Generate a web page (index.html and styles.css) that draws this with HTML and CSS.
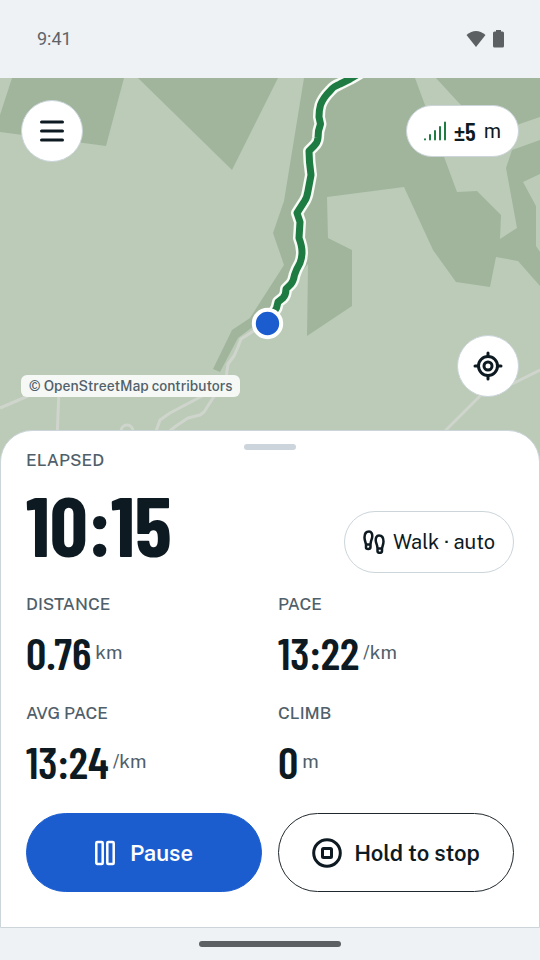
FILE: index.html
```
<!DOCTYPE html>
<html lang="en">
<head>
<meta charset="utf-8">
<meta name="viewport" content="width=device-width, initial-scale=1">
<title>Recording</title>
<link rel="stylesheet" href="styles.css">
</head>
<body>
<header class="status">
  <span class="clock">9:41</span>
  <span class="status-icons">
    <svg width="20" height="18" viewBox="0 0 20 18" aria-hidden="true"><path d="M.5 5Q10-3 19.500 5L10 17Z"/></svg>
    <svg width="11" height="18" viewBox="0 0 11 18" aria-hidden="true"><path d="M3 0h5v1.500h1.500q1.500 0 1.500 1.500v13q0 1.500-1.500 1.500h-8Q0 17.500 0 16V3q0-1.500 1.500-1.500H3z"/></svg>
  </span>
</header>

<main class="map">
  <svg class="map-art" viewBox="0 78 540 384" preserveAspectRatio="xMidYMin slice" aria-hidden="true">
    <g class="wood">
      <path d="M12 78H124L106 146L0 132V115Z"/>
      <path d="M138 78H278L232 170Z"/>
      <path d="M304 78H540V286L518 261L496 257L490 287L456 282L433 250L404 187L327 197L328 238L352 250V306L307 336L308 264L275 305L258 323L238 338L220 372L213 369L232 330L250 318L284 265L273 233L284 201Z"/>
    </g>
    <g class="field">
      <path d="M415 78H436L458 102L490 134L540 117V140L512 150L506 168L517 228L500 239L501 215L477 191L457 192Z"/>
      <path d="M523 182L540 174V252L536 246V206Z"/>
    </g>
    <g class="road">
      <path d="M267 323L252 332L241 339L238 347L234 356L228 364L226 378L213 398L204 412L200 415L188 418L176 426L166 434"/>
      <path d="M206 394L170 413L160 420L155 434M59 390L57 440M0 408L28 396M440 436L486 390L514 383L540 370"/>
      <circle cx="127" cy="431" r="6"/>
    </g>
    <path class="track-edge" d="M362 72L350 79Q346 81 340 84Q334 86 330 91Q323 98 320.500 105Q319 110 319 117L320.500 124L318.500 131L318 138Q317.500 143 314 146L309 151L309.500 162L311 175L308 191Q307 198 304 202L297 213L300 222L299 238Q302 246 302 252Q302 258 300 263Q296 270 294.500 275Q293.500 281 291 284L286 289Q286 295 283 298L278 302L276.500 308L267 323"/>
    <path class="track" d="M362 72L350 79Q346 81 340 84Q334 86 330 91Q323 98 320.500 105Q319 110 319 117L320.500 124L318.500 131L318 138Q317.500 143 314 146L309 151L309.500 162L311 175L308 191Q307 198 304 202L297 213L300 222L299 238Q302 246 302 252Q302 258 300 263Q296 270 294.500 275Q293.500 281 291 284L286 289Q286 295 283 298L278 302L276.500 308L267 323"/>
    <circle class="here" cx="267.500" cy="323.500" r="13.700"/>
  </svg>
  <div class="map-row">
    <button class="round" aria-label="Menu">
      <svg width="24" height="24" viewBox="0 0 24 24" aria-hidden="true"><path d="M1.500 3h21M1.500 12h21M1.500 21h21"/></svg>
    </button>
    <div class="gps">
      <svg width="22" height="20" viewBox="0 0 22 20" aria-hidden="true"><path d="M1 18.200v.3M6 14v4.500M11 10v8.500M16 6v12.500M21 1.500v17"/></svg>
      <strong>±5</strong><span>m</span>
    </div>
  </div>
  <div class="map-row map-row-end">
    <a class="credit" href="#">© OpenStreetMap contributors</a>
    <button class="round" aria-label="Center on my location">
      <svg width="30" height="30" viewBox="0 0 30 30" aria-hidden="true"><circle cx="15" cy="15" r="9.500"/><circle cx="15" cy="15" r="4"/><path d="M15 2v3.500M15 24.500v3.500M2 15h3.500M24.500 15h3.500"/></svg>
    </button>
  </div>
</main>

<section class="sheet">
  <div class="handle"></div>
  <div class="label">ELAPSED</div>
  <div class="elapsed">
    <div class="timer">10:15</div>
    <button class="mode">
      <svg width="22" height="24" viewBox="0 0 22 24" aria-hidden="true"><path d="M3 14.500C2.500 12 1.500 10 1.500 7.500C1.500 4 3 1.500 6 1.500C8.500 1.500 9.500 4 9.200 7C9 9.500 7.500 11 7.500 14.500ZM3 14.500V17.500Q3 19 5.200 19Q7.500 19 7.500 17V14.500M19 18.500C19.500 16 20.500 14 20.500 11.500C20.500 8 19 5.500 16 5.500C13.500 5.500 12.500 8 12.800 11C13 13.500 14.500 15 14.500 18.500ZM19 18.500V21Q19 22.800 16.800 22.800Q14.500 22.800 14.500 21V18.500"/></svg>
      Walk · auto
    </button>
  </div>
  <dl class="stats">
    <div><dt class="label">DISTANCE</dt><dd><strong>0.76</strong><span>km</span></dd></div>
    <div><dt class="label">PACE</dt><dd><strong>13:22</strong><span>/km</span></dd></div>
    <div><dt class="label">AVG PACE</dt><dd><strong>13:24</strong><span>/km</span></dd></div>
    <div><dt class="label">CLIMB</dt><dd><strong>0</strong><span>m</span></dd></div>
  </dl>
  <div class="actions">
    <button class="action primary">
      <svg width="20" height="26" viewBox="0 0 20 26" aria-hidden="true"><rect x="1.300" y="2" width="6.400" height="22" rx="1"/><rect x="12.300" y="2" width="6.400" height="22" rx="1"/></svg>
      Pause
    </button>
    <button class="action">
      <svg width="30" height="30" viewBox="0 0 30 30" aria-hidden="true"><circle cx="15" cy="15" r="13.300"/><rect x="10.500" y="10.500" width="9" height="9" rx="1"/></svg>
      Hold to stop
    </button>
  </div>
</section>
<footer class="nav"><div class="nav-pill"></div></footer>
</body>
</html>
```
FILE: styles.css
```
* { box-sizing: border-box; }
body {
  margin: 0;
  min-height: 100vh;
  display: flex;
  flex-direction: column;
  background: #eef2f5;
  color: #0e1a22;
  font-family: "Public Sans", Inter, "Liberation Sans", sans-serif;
}
button { margin: 0; font: inherit; color: inherit; cursor: pointer; }
svg { display: block; flex: none; }
button svg { fill: none; stroke: currentColor; stroke-width: 3; stroke-linecap: round; stroke-linejoin: round; }

.status {
  display: flex;
  justify-content: space-between;
  align-items: center;
  height: 78px;
  padding: 0 36px 1px 37px;
  color: #5f6468;
  font-family: Roboto, sans-serif;
  font-size: 18px;
}
.status-icons { display: flex; gap: 7px; fill: #5c6063; }

.map {
  position: relative;
  flex: 1;
  display: flex;
  flex-direction: column;
  justify-content: space-between;
  min-height: 384px;
  margin-bottom: -32px;
  padding: 22px 21px 65px;
  background: #bbcbb7;
  overflow: hidden;
}
.map-art { position: absolute; inset: 0; width: 100%; height: 100%; }
.wood { fill: #a1b59d; }
.field { fill: #bbcbb7; }
.road { fill: none; stroke: #cfd5cc; stroke-width: 3; stroke-linejoin: round; }
.track, .track-edge { fill: none; stroke: #1e7b42; stroke-width: 7; stroke-linejoin: round; }
.track-edge { stroke: #f8fbf6; stroke-width: 12; }
.here { fill: #1b5dcf; stroke: #fff; stroke-width: 4; }
.map-row { position: relative; display: flex; justify-content: space-between; align-items: center; }
.map-row-end { align-items: flex-end; }
.round {
  display: grid;
  place-items: center;
  width: 62px;
  height: 62px;
  padding: 0;
  border: 1px solid #cbd5da;
  border-radius: 50%;
  background: #fff;
}
.gps {
  display: flex;
  align-items: center;
  gap: 8px;
  height: 52px;
  padding: 0 17px;
  border: 1px solid #cbd5da;
  border-radius: 26px;
  background: #fff;
  font-size: 20px;
}
.gps svg { fill: none; stroke: #1e7b42; stroke-width: 2; stroke-linecap: round; }
.gps strong, .timer, dd strong { font-family: "Barlow Condensed", "Roboto Condensed", "Liberation Sans Narrow", "Liberation Sans", sans-serif; font-weight: 700; }
.gps strong { font-size: 25px; font-weight: 600; }
.credit {
  padding: 0 8px;
  border-radius: 6px;
  background: #f5f8f5;
  color: #50606a;
  font-size: 14px;
  font-weight: 500;
  line-height: 22px;
  text-decoration: none;
}

.sheet {
  position: relative;
  padding: 13px 25px 35px;
  border: 1px solid #cbd5da;
  border-radius: 32px 32px 0 0;
  background: #fff;
}
.handle { width: 52px; height: 6px; margin: 0 auto; border-radius: 3px; background: #cbd5db; }
.label { color: #50606a; font-size: 17px; font-weight: 500; line-height: 20px; }
.elapsed { display: flex; justify-content: space-between; align-items: flex-end; margin-top: 14px; }
.timer { padding-bottom: 9px; font-size: 84px; line-height: 80px; }
.mode {
  display: flex;
  align-items: center;
  gap: 8px;
  height: 62px;
  padding: 0 18px;
  border: 1px solid #cbd5da;
  border-radius: 31px;
  background: #fff;
  font-size: 20px;
}
.mode svg { stroke-width: 2.5; }
.stats { display: grid; grid-template-columns: 1fr 1fr; gap: 24px 16px; margin: 21px 0 25px; }
dd { display: flex; align-items: center; gap: 4px; margin: 12px 0 1px; line-height: 52px; }
dd strong { font-size: 45px; font-weight: 600; }
dd span { color: #50606a; font-size: 19px; }
.actions { display: grid; grid-template-columns: 1fr 1fr; gap: 16px; }
.action {
  display: flex;
  align-items: center;
  justify-content: center;
  gap: 12px;
  height: 79px;
  padding: 0;
  border: 1px solid #20282d;
  border-radius: 40px;
  background: #fff;
  font-size: 22px;
  font-weight: 600;
}
.primary { gap: 15px; border-color: #1b5dcf; background: #1b5dcf; color: #fff; }
.action.primary svg { stroke-width: 2.5; }

.nav { display: grid; place-items: center; height: 32px; }
.nav-pill { width: 142px; height: 6px; border-radius: 3px; background: #5c6063; }
```
